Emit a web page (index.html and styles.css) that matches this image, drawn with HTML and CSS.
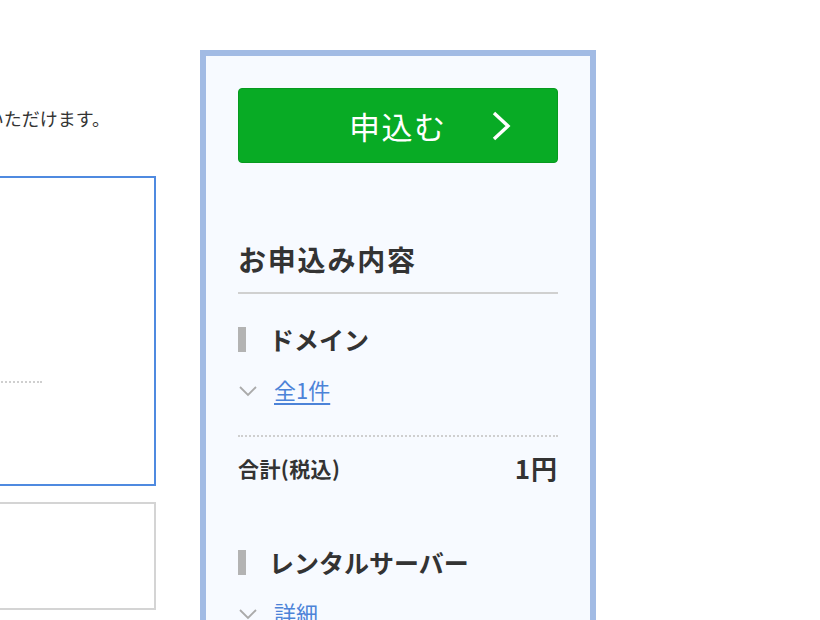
FILE: index.html
```html
<!DOCTYPE html>
<html lang="ja">
<head>
<meta charset="utf-8">
<link rel="stylesheet" href="styles.css">
</head>
<body>
<div class="page">
  <div class="main">
    <p class="lead">上記の内容でお申込みいただけます。</p>
    <div class="box box-active">
      <div class="dotline"></div>
    </div>
    <div class="box box-plain"></div>
  </div>
  <aside class="panel">
    <a class="apply-btn" href="#">
      <span class="apply-label">申込む</span>
      <svg class="apply-arrow" width="20" height="30" viewBox="0 0 20 30"><path d="M3 2 L17 15 L3 28" fill="none" stroke="#fff" stroke-width="3.4"/></svg>
    </a>
    <h2 class="summary-title">お申込み内容</h2>
    <section class="group">
      <h3 class="group-title">ドメイン</h3>
      <div class="toggle">
        <svg class="chev" width="18" height="12" viewBox="0 0 18 12"><path d="M1 2 L9 10 L17 2" fill="none" stroke="#aaa" stroke-width="1.8"/></svg>
        <a href="#" class="toggle-link">全1件</a>
      </div>
      <div class="total">
        <span class="total-label">合計(税込)</span>
        <span class="total-value">1円</span>
      </div>
    </section>
    <section class="group group-server">
      <h3 class="group-title">レンタルサーバー</h3>
      <div class="toggle">
        <svg class="chev" width="18" height="12" viewBox="0 0 18 12"><path d="M1 2 L9 10 L17 2" fill="none" stroke="#aaa" stroke-width="1.8"/></svg>
        <a href="#" class="toggle-link plain">詳細</a>
      </div>
    </section>
  </aside>
</div>
</body>
</html>
```

FILE: styles.css
```css
html, body {
  margin: 0;
  padding: 0;
  background: #fff;
  overflow: hidden;
}
body {
  font-family: "Noto Sans CJK JP", "Noto Sans", sans-serif;
  color: #333;
  width: 820px;
  height: 620px;
}
.page {
  display: flex;
  align-items: flex-start;
  gap: 44px;
  margin-left: -300px;
}
.main {
  width: 456px;
  flex: none;
  padding-top: 103px;
}
.lead {
  margin: 0;
  font-size: 18px;
  line-height: 30px;
  text-align: right;
  padding-right: 46px;
  color: #333;
}
.box {
  box-sizing: border-box;
  background: #fff;
}
.box-active {
  margin-top: 43px;
  height: 310px;
  border: 2px solid #4f8ae0;
  padding-top: 203px;
}
.dotline {
  width: 340px;
  border-top: 2px dotted #cfcfcf;
}
.box-plain {
  margin-top: 16px;
  height: 108px;
  border: 2px solid #d4d4d4;
}
.panel {
  box-sizing: border-box;
  flex: none;
  width: 396px;
  height: 570px;
  margin-top: 50px;
  border: 6px solid #a2bbe4;
  border-bottom: none;
  background: #f7faff;
  padding: 32px 32px 0;
  overflow: hidden;
}
.apply-btn {
  box-sizing: border-box;
  display: flex;
  align-items: center;
  height: 75px;
  background: #08ab25;
  border: 1px solid #079a1f;
  border-radius: 4px;
  text-decoration: none;
  color: #fff;
  padding-left: 110px;
}
.apply-label {
  font-size: 31px;
  line-height: 40px;
  letter-spacing: 1.5px;
}
.apply-arrow {
  margin-left: 44px;
}
.summary-title {
  margin: 78px 0 0;
  font-size: 28px;
  line-height: 36px;
  font-weight: 700;
  letter-spacing: 1.8px;
  padding-bottom: 15px;
  border-bottom: 2px solid #d0d0d0;
}
.group-title {
  position: relative;
  margin: 28px 0 0;
  padding-left: 31px;
  font-size: 25px;
  line-height: 34px;
  font-weight: 700;
}
.group-title::before {
  content: "";
  position: absolute;
  left: 0;
  top: 5px;
  width: 8px;
  height: 25px;
  background: #b3b3b3;
}
.toggle {
  display: flex;
  align-items: center;
  gap: 17px;
  margin-top: 18px;
  height: 30px;
}
.chev {
  margin-left: 1px;
  margin-top: 4px;
}
.toggle-link {
  font-size: 22px;
  line-height: 30px;
  color: #4c83d8;
  text-decoration: underline;
  text-underline-offset: 4px;
}
.toggle-link.plain {
  text-decoration: none;
}
.total {
  display: flex;
  justify-content: space-between;
  align-items: center;
  margin-top: 31px;
  border-top: 2px dotted #cfcfcf;
  padding-top: 16px;
  height: 30px;
}
.total-label {
  font-size: 21px;
  font-weight: 700;
  line-height: 30px;
  letter-spacing: 0.4px;
}
.total-value {
  font-size: 26px;
  font-weight: 700;
  line-height: 30px;
  letter-spacing: 1px;
}
.group-server .group-title {
  margin-top: 62px;
}
.group-server .toggle {
  margin-top: 18px;
}
```
